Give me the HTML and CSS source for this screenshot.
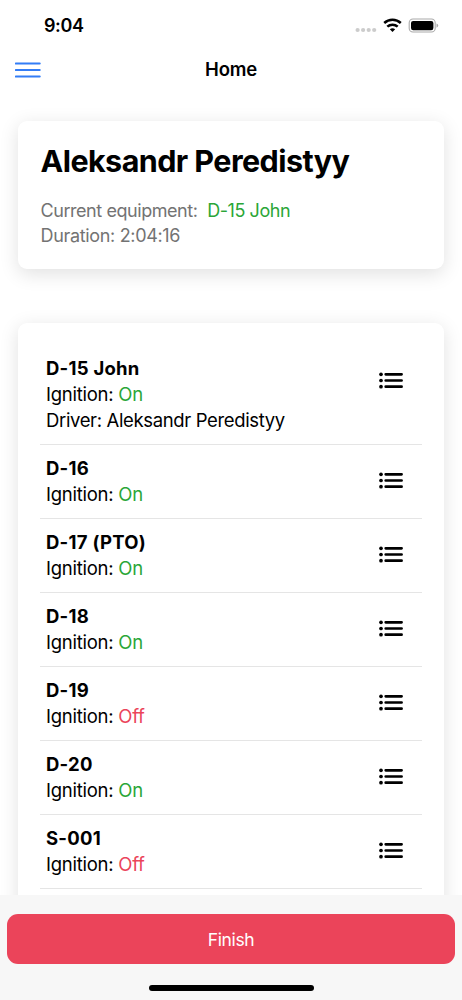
FILE: index.html
```
<!DOCTYPE html>
<html lang="en">
<head>
<meta charset="utf-8">
<meta name="viewport" content="width=device-width, initial-scale=1">
<title>Home</title>
<link rel="stylesheet" href="styles.css">
</head>
<body>
<svg class="sprite" aria-hidden="true">
  <symbol id="list" viewBox="0 0 24 17">
    <g stroke="#000" stroke-width="2.7" stroke-linecap="round"><path d="M6.7 2.3H22.6M6.7 8.5H22.6M6.7 14.7H22.6"/></g>
    <circle cx="2" cy="2.3" r="1.85"/><circle cx="2" cy="8.5" r="1.85"/><circle cx="2" cy="14.7" r="1.85"/>
  </symbol>
</svg>
<div class="screen">
  <div class="status">
    <span class="time">9:04</span>
    <svg class="signals" viewBox="0 0 84 16" width="84" height="16">
      <g fill="#ccc"><circle cx="2.6" cy="12" r="2.1"/><circle cx="8.1" cy="12" r="2.1"/><circle cx="13.7" cy="12" r="2.1"/><circle cx="19.2" cy="12" r="2.1"/></g>
      <g fill="none" stroke="#000" stroke-width="2.5"><path d="M29.2 5A12.2 12.2 0 0 1 45.8 5"/><path d="M32.3 8.7A7.6 7.6 0 0 1 42.7 8.7"/></g>
      <path d="M34.8 11.3Q37.5 9 40.2 11.3L37.5 14Z"/>
      <rect x="54.2" y="1" width="26" height="13" rx="3.8" fill="none" stroke="#aaa" stroke-width="1.1"/>
      <rect x="56" y="2.9" width="22.4" height="9.3" rx="2.2"/>
      <path d="M81.5 5.4Q83.2 6 83.2 7.5T81.5 9.7Z" fill="#aaa"/>
    </svg>
  </div>
  <header class="nav">
    <svg class="menu" viewBox="0 0 26 16" width="26" height="16" stroke="#337df6" stroke-width="2.1" stroke-linecap="round"><path d="M.9 1.5H24.7M.9 8H24.7M.9 14.5H24.7"/></svg>
    <h1 class="nav-title">Home</h1>
  </header>
  <main class="content">
    <section class="card profile">
      <h2 class="name">Aleksandr Peredistyy</h2>
      <p class="meta">Current equipment: <span class="equipment on">D-15 John</span></p>
      <p class="meta">Duration: 2:04:16</p>
    </section>
    <section class="card list">
      <div class="row"><div><h3>D-15 John</h3><p>Ignition: <span class="on">On</span></p><p class="driver">Driver: Aleksandr Peredistyy</p></div><svg class="icon"><use href="#list"/></svg></div>
      <div class="row"><div><h3>D-16</h3><p>Ignition: <span class="on">On</span></p></div><svg class="icon"><use href="#list"/></svg></div>
      <div class="row"><div><h3>D-17 (PTO)</h3><p>Ignition: <span class="on">On</span></p></div><svg class="icon"><use href="#list"/></svg></div>
      <div class="row"><div><h3>D-18</h3><p>Ignition: <span class="on">On</span></p></div><svg class="icon"><use href="#list"/></svg></div>
      <div class="row"><div><h3>D-19</h3><p>Ignition: <span class="off">Off</span></p></div><svg class="icon"><use href="#list"/></svg></div>
      <div class="row"><div><h3>D-20</h3><p>Ignition: <span class="on">On</span></p></div><svg class="icon"><use href="#list"/></svg></div>
      <div class="row"><div><h3>S-001</h3><p>Ignition: <span class="off">Off</span></p></div><svg class="icon"><use href="#list"/></svg></div>
    </section>
  </main>
  <footer class="footer">
    <button class="finish">Finish</button>
    <div class="home-bar"></div>
  </footer>
</div>
</body>
</html>
```
FILE: styles.css
```
* { box-sizing: border-box; margin: 0; padding: 0; }
body { background: #fff; color: #000; font-family: Inter, "Liberation Sans", sans-serif; font-size: 18.5px; }
.sprite { display: none; }
.screen { width: 462px; height: 1000px; display: flex; flex-direction: column; overflow: hidden; }
.status { height: 50px; display: flex; justify-content: space-between; align-items: flex-start; padding: 14px 23px 0 44px; }
.time { font-size: 18px; font-weight: 600; line-height: 24px; letter-spacing: -0.4px; }
.signals { margin-top: 4px; }
.nav { height: 40px; display: grid; grid-template-columns: 60px 1fr 60px; align-items: center; padding: 0 15px; }
.nav-title { font-size: 18.5px; font-weight: 600; text-align: center; letter-spacing: -0.2px; padding-bottom: 2px; }
.content { flex: 1; min-height: 0; overflow: hidden; padding: 31px 18px 0; }
.card { background: #fff; border-radius: 9px; box-shadow: 0 4.5px 19px rgba(0, 0, 0, 0.12); }
.profile { height: 148px; padding: 20px 23px 20px 22.5px; margin-bottom: 53.5px; }
.name { font-size: 30.5px; font-weight: 700; line-height: 40px; letter-spacing: -0.57px; margin-bottom: 18px; }
.meta { color: #737373; font-size: 18px; line-height: 24.6px; letter-spacing: -0.44px; }
.meta + .meta { letter-spacing: -0.33px; }
.equipment { margin-left: 5px; letter-spacing: -0.42px; }
.on { color: #2ba637; }
.off { color: #eb445a; }
.list { height: 700px; padding: 22.5px 22px 0; }
.row { display: flex; justify-content: space-between; align-items: flex-start; padding: 10px 19px 11px 6px; border-bottom: 1px solid #e5e5e5; line-height: 26px; }
.row h3 { font-size: 18.5px; font-weight: 700; letter-spacing: 0.25px; }
.row p { letter-spacing: -0.25px; }
.row .driver { letter-spacing: -0.36px; }
.icon { width: 24px; height: 17px; margin-top: 17px; }
.footer { height: 105px; background: #f7f7f7; padding: 19px 7px 0; display: flex; flex-direction: column; align-items: center; }
.finish { width: 100%; height: 50px; border: 0; border-radius: 11px; background: #eb445a; color: #fff; font: 400 17.5px/50px Inter, sans-serif; letter-spacing: -0.35px; padding-top: 1px; }
.home-bar { width: 165px; height: 6px; margin-top: 21px; border-radius: 3px; background: #000; }
```
